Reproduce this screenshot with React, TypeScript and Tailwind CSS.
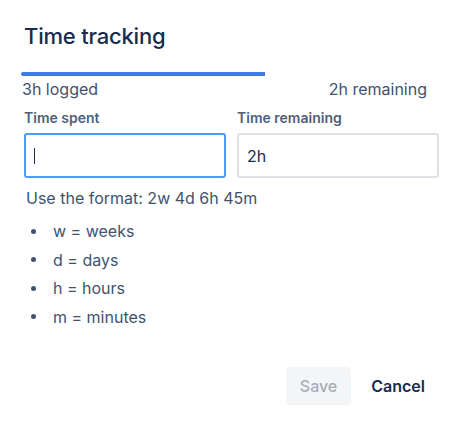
import React from "react"

const UNITS = ["w = weeks", "d = days", "h = hours", "m = minutes"]

export default function App() {
  return (
    <div
      className="w-[463px] h-[432px] bg-white text-[#42526E] overflow-hidden"
      style={{ fontFamily: "Inter, 'Noto Sans', sans-serif" }}
    >
      <div className="pt-[21px] px-[24px]">
        <h1 className="text-[22px] leading-[30px] font-medium text-[#172B4D] tracking-[-0.2px]">
          Time tracking
        </h1>

        {/* progress */}
        <div className="mt-[21px] ml-[-3px] mr-[12px]">
          <div className="h-[4px] w-full rounded-l-full">
            <div className="h-[4px] w-[244px] bg-[#3D7BEC] rounded-l-full" />
          </div>
          <div className="flex justify-between mt-[3px] text-[16px] leading-[20px]">
            <span className="ml-[1px]">3h logged</span>
            <span>2h remaining</span>
          </div>
        </div>

        {/* fields */}
        <div className="grid grid-cols-2 gap-[11px] mt-[9px]">
          <label className="flex flex-col">
            <span className="text-[14px] leading-[20px] font-semibold text-[#505F79]">Time spent</span>
            <div className="mt-[5px] h-[45px] border-2 border-[#4C9AFF] rounded-[3px] bg-white flex items-center px-[8px]">
              <span className="w-[1px] h-[16px] bg-[#172B4D]" />
            </div>
          </label>
          <label className="flex flex-col">
            <span className="text-[14px] leading-[20px] font-semibold text-[#505F79]">Time remaining</span>
            <div className="mt-[5px] h-[45px] border-2 border-[#DFE1E6] rounded-[3px] bg-white flex items-center px-[8px] text-[16px] text-[#172B4D]">
              2h
            </div>
          </label>
        </div>

        <p className="mt-[10px] ml-[2px] text-[16px] leading-[20px]">Use the format: 2w 4d 6h 45m</p>

        <ul className="mt-[9px] flex flex-col">
          {UNITS.map((u) => (
            <li key={u} className="flex items-center h-[28.5px] text-[16px]">
              <span className="w-[5px] h-[5px] rounded-full bg-[#42526E] ml-[7px] mr-[17px]" />
              {u}
            </li>
          ))}
        </ul>

        <div className="flex justify-end items-center gap-[8px] mt-[36px] mr-[2px]">
          <button className="h-[38px] px-[14px] rounded-[4px] bg-[#F4F5F7] text-[#A5ADBA] text-[16px] font-medium">
            Save
          </button>
          <button className="h-[38px] px-[12px] rounded-[4px] text-[#172B4D] text-[16px] font-semibold">
            Cancel
          </button>
        </div>
      </div>
    </div>
  )
}
